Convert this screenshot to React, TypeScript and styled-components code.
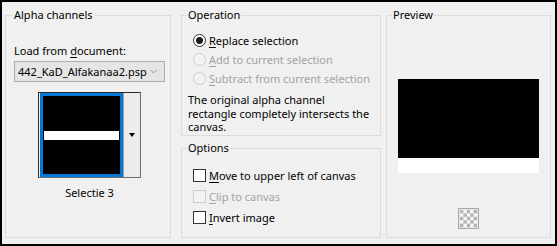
import styled, { createGlobalStyle } from "styled-components";
import { ChevronDown } from "lucide-react";

const GlobalStyle = createGlobalStyle`
  html, body { margin: 0; padding: 0; background: #fff; }
  body {
    font-family: "Noto Sans", "Segoe UI", sans-serif;
    font-size: 11px;
    color: #000;
  }
  u { text-decoration-thickness: 1px; text-underline-offset: 2px; }
`;

const Dialog = styled.div`
  box-sizing: border-box;
  width: 557px;
  height: 246px;
  border: 2px solid #000;
  background: #f0f0f0;
  display: flex;
  padding: 5px 4px 6px 3px;
`;

const Column = styled.div<{ $w: number; $gap?: number }>`
  width: ${(p) => p.$w}px;
  margin-right: ${(p) => p.$gap ?? 0}px;
  display: flex;
  flex-direction: column;
  gap: 4px;
`;

const Group = styled.fieldset<{ $h?: number }>`
  box-sizing: border-box;
  margin: 0;
  padding: 0;
  min-width: 0;
  border: 1px solid #dcdcdc;
  height: ${(p) => (p.$h ? `${p.$h}px` : "100%")};
  display: flex;
  flex-direction: column;
`;

const Legend = styled.legend<{ $x: number }>`
  margin-left: ${(p) => p.$x}px;
  padding: 0 1px;
  line-height: 16px;
  font-size: 11px;
`;

const Label = styled.div`
  margin: 20px 0 0 8px;
  line-height: 16px;
`;

const Select = styled.div`
  box-sizing: border-box;
  margin: 2px 0 0 8px;
  width: 151px;
  height: 21px;
  background: #e5e5e5;
  border: 1px solid #acacac;
  display: flex;
  align-items: center;
  justify-content: space-between;
  padding: 0 5px 0 3px;
  svg { color: #606060; }
`;

const SwatchWrap = styled.div`
  margin: 10px 0 0 32px;
  width: 103px;
  display: flex;
  flex-direction: column;
  align-items: center;
`;

const SwatchFrame = styled.div`
  box-sizing: border-box;
  width: 103px;
  height: 86px;
  display: flex;
  border: 1px solid #6d6d6d;
  border-top-color: #2b2b2b;
  border-left-color: #2b2b2b;
  padding: 0 0 0 1px;
`;

const Thumb = styled.div`
  box-sizing: border-box;
  width: 83px;
  height: 84px;
  border: 3px solid #0078d7;
  padding: 1px;
  background: #000;
  display: flex;
  flex-direction: column;
`;

const Band = styled.div<{ $c: string; $h?: number }>`
  background: ${(p) => p.$c};
  ${(p) => (p.$h ? `height: ${p.$h}px;` : "flex: 1;")}
`;

const DropButton = styled.div`
  box-sizing: border-box;
  flex: 1;
  background: #ececec;
  border-left: 1px solid #a0a0a0;
  display: flex;
  align-items: center;
  justify-content: center;
  &::after {
    content: "";
    border-left: 3.5px solid transparent;
    border-right: 3.5px solid transparent;
    border-top: 4px solid #000;
  }
`;

const Caption = styled.div`
  margin-top: 7px;
  line-height: 16px;
`;

const OptionList = styled.div<{ $top: number; $row: number }>`
  margin: ${(p) => p.$top}px 0 0 11px;
  display: flex;
  flex-direction: column;
  & > * { height: ${(p) => p.$row}px; }
`;

const Option = styled.div<{ $disabled?: boolean }>`
  display: flex;
  align-items: center;
  gap: 3px;
  color: ${(p) => (p.$disabled ? "#a3a3a3" : "#000")};
`;

const Radio = styled.span<{ $on?: boolean; $disabled?: boolean }>`
  box-sizing: border-box;
  width: 13px;
  height: 13px;
  border-radius: 50%;
  border: 1px solid ${(p) => (p.$disabled ? "#cccccc" : "#333")};
  background: ${(p) => (p.$disabled ? "#f3f3f3" : "#fff")};
  display: flex;
  align-items: center;
  justify-content: center;
  &::after {
    content: "";
    display: ${(p) => (p.$on ? "block" : "none")};
    width: 7px;
    height: 7px;
    border-radius: 50%;
    background: #1a1a1a;
  }
`;

const Check = styled.span<{ $disabled?: boolean }>`
  box-sizing: border-box;
  width: 13px;
  height: 13px;
  border: 1px solid ${(p) => (p.$disabled ? "#cccccc" : "#333")};
  background: ${(p) => (p.$disabled ? "#f3f3f3" : "#fff")};
`;

const Note = styled.p`
  margin: 5px 0 0 6px;
  line-height: 13.5px;
`;

const PreviewArea = styled.div`
  margin-top: 56px;
  display: flex;
  flex-direction: column;
  align-items: center;
`;

const PreviewImage = styled.div`
  width: 141px;
  display: flex;
  flex-direction: column;
`;

const CheckerButton = styled.div`
  margin-top: 35px;
  width: 21px;
  height: 21px;
  svg { display: block; }
`;

function Checker() {
  const cells = [];
  for (let r = 0; r < 5; r++) {
    for (let c = 0; c < 5; c++) {
      if ((r + c) % 2 === 0) cells.push(<rect key={`${r}-${c}`} x={2 + c * 3.4} y={2 + r * 3.4} width={3.4} height={3.4} fill="#b4b4b4" />);
    }
  }
  return (
    <svg width="21" height="21" viewBox="0 0 21 21">
      <rect x="0.5" y="0.5" width="20" height="20" fill="#e6e6e6" stroke="#a9a9a9" />
      <rect x="2" y="2" width="17" height="17" fill="#f8f8f8" />
      {cells}
    </svg>
  );
}

export default function App() {
  return (
    <>
      <GlobalStyle />
      <Dialog>
        <Column $w={166} $gap={10}>
          <Group>
            <Legend $x={7}>Alpha channels</Legend>
            <Label>
              Load from <u>d</u>ocument:
            </Label>
            <Select>
              <span>442_KaD_Alfakanaa2.psp</span>
              <ChevronDown size={11} strokeWidth={1.3} />
            </Select>
            <SwatchWrap>
              <SwatchFrame>
                <Thumb>
                  <Band $c="#000" />
                  <Band $c="#fff" $h={9} />
                  <Band $c="#000" />
                </Thumb>
                <DropButton />
              </SwatchFrame>
              <Caption>Selectie 3</Caption>
            </SwatchWrap>
          </Group>
        </Column>

        <Column $w={200} $gap={5}>
          <Group $h={129}>
            <Legend $x={5}>Operation</Legend>
            <OptionList $top={8} $row={19}>
              <Option>
                <Radio $on />
                <span>
                  <u>R</u>eplace selection
                </span>
              </Option>
              <Option $disabled>
                <Radio $disabled />
                <span>
                  <u>A</u>dd to current selection
                </span>
              </Option>
              <Option $disabled>
                <Radio $disabled />
                <span>
                  <u>S</u>ubtract from current selection
                </span>
              </Option>
            </OptionList>
            <Note>
              The original alpha channel
              <br />
              rectangle completely intersects the
              <br />
              canvas.
            </Note>
          </Group>
          <Group $h={98}>
            <Legend $x={5}>Options</Legend>
            <OptionList $top={9} $row={21}>
              <Option>
                <Check />
                <span>
                  <u>M</u>ove to upper left of canvas
                </span>
              </Option>
              <Option $disabled>
                <Check $disabled />
                <span>
                  <u>C</u>lip to canvas
                </span>
              </Option>
              <Option>
                <Check />
                <span>
                  <u>I</u>nvert image
                </span>
              </Option>
            </OptionList>
          </Group>
        </Column>

        <Column $w={165}>
          <Group>
            <Legend $x={5}>Preview</Legend>
            <PreviewArea>
              <PreviewImage>
                <Band $c="#000" $h={79} />
                <Band $c="#fff" $h={15} />
              </PreviewImage>
              <CheckerButton>
                <Checker />
              </CheckerButton>
            </PreviewArea>
          </Group>
        </Column>
      </Dialog>
    </>
  );
}
